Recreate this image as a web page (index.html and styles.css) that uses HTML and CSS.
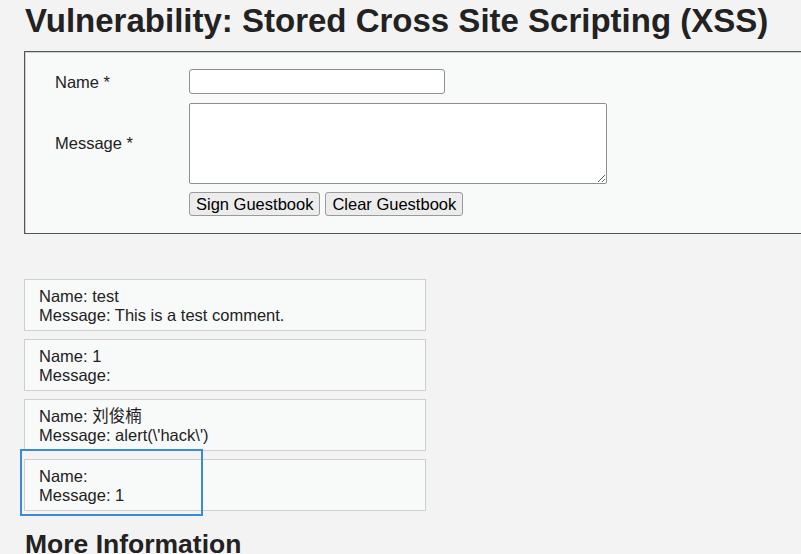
FILE: index.html
```html
<!DOCTYPE html>
<html>
<head>
<meta charset="utf-8">
<link rel="stylesheet" href="styles.css">
</head>
<body>
<div class="page">
  <h1 class="title">Vulnerability: Stored Cross Site Scripting (XSS)</h1>
  <div class="form-box">
    <form class="guest-form">
      <label class="label">Name *</label>
      <input class="name-input" type="text">
      <label class="label">Message *</label>
      <textarea class="msg-input"></textarea>
      <span></span>
      <div class="buttons">
        <button type="button" class="btn">Sign Guestbook</button>
        <button type="button" class="btn">Clear Guestbook</button>
      </div>
    </form>
  </div>
  <div class="comments">
    <div class="comment">Name: test<br>Message: This is a test comment.</div>
    <div class="comment">Name: 1<br>Message: </div>
    <div class="comment">Name: 刘俊楠<br>Message: alert(\'hack\')</div>
    <div class="comment highlight-wrap">Name: <br>Message: 1<div class="highlight"></div></div>
  </div>
  <h2 class="more">More Information</h2>
</div>
</body>
</html>
```
FILE: styles.css
```css
html, body {
  margin: 0;
  padding: 0;
  overflow: hidden;
  background: #f3f3f3;
}
body {
  font-family: "Liberation Sans", Arial, "Noto Sans CJK SC", sans-serif;
  color: #222;
  font-size: 16.5px;
}
.page {
  padding-left: 24px;
  width: 777px;
}
.title {
  margin: 0;
  padding-top: 2px;
  font-size: 33px;
  line-height: 38px;
  font-weight: bold;
  color: #222;
  padding-left: 1px;
  white-space: nowrap;
}
.form-box {
  margin-top: 11px;
  margin-right: -4px;
  border: 1px solid #555;
  box-shadow: inset 1px 1px 0 #cfcfcf;
  background: #f8f9f9;
  height: 181px;
  box-sizing: content-box;
}
.guest-form {
  display: grid;
  grid-template-columns: 134px auto;
  align-items: center;
  row-gap: 8px;
  padding: 17px 0 0 30px;
  justify-items: start;
}
.label {
  line-height: 19px;
  color: #222;
}
.name-input {
  width: 256px;
  height: 25px;
  box-sizing: border-box;
  border: 1px solid #8f8f8f;
  border-radius: 3px;
  background: #fff;
  margin: 0 0 1px 0;
}
.msg-input {
  width: 418px;
  height: 81px;
  box-sizing: border-box;
  border: 1px solid #8f8f8f;
  border-radius: 2px;
  background: #fff;
  margin: 0;
  resize: both;
}
.buttons {
  display: flex;
  gap: 5px;
}
.btn {
  font-family: "Liberation Sans", Arial, sans-serif;
  font-size: 16.5px;
  color: #000;
  height: 24px;
  padding: 0 6px;
  line-height: 20px;
  background: #ececec;
  border: 1px solid #9a9a9a;
  border-radius: 3px;
  margin: 0;
}
.comments {
  margin-top: 45px;
  display: flex;
  flex-direction: column;
  gap: 8px;
  width: 402px;
}
.comment {
  border: 1px solid #cfcfcf;
  background: #f8f9f9;
  padding: 7px 13px 5px 14px;
  line-height: 19px;
  height: 38px;
  color: #222;
}
.highlight-wrap {
  position: relative;
}
.highlight {
  position: absolute;
  left: -5px;
  top: -11px;
  width: 179px;
  height: 63px;
  border: 2px solid #3a8ad8;
}
.more {
  margin: 18px 0 0 0;
  font-size: 26.5px;
  line-height: 30px;
  font-weight: bold;
  color: #222;
  padding-left: 1px;
}
```
